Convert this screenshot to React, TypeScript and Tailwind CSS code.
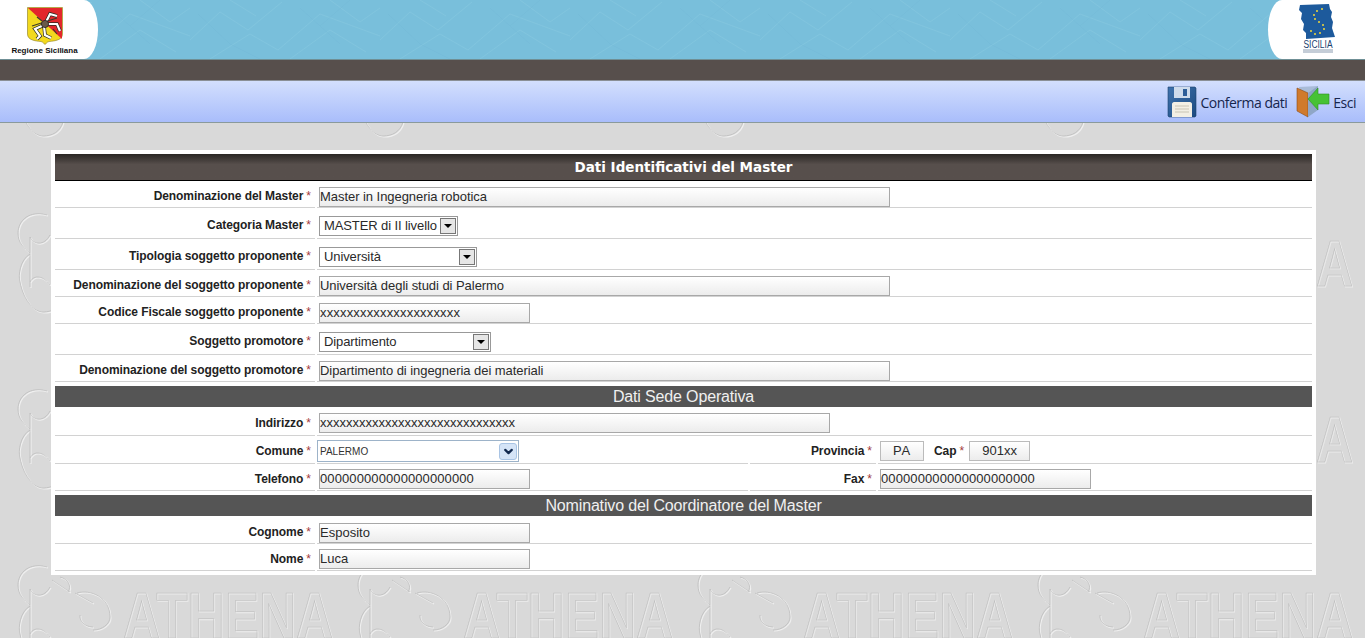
import type { ReactNode } from "react";
import { ChevronDown } from "lucide-react";

const ARIAL = "font-['Liberation_Sans',Arial,sans-serif]";

// embossed ATHENA tile repeated over the grey page
const Watermark = () => {
  const curls = (
    <g fill="none" transform="translate(0,64)">
      <path d="M47 -25C30 -30 18 -20 18 -7C18 3 24 8 30 13" />
      <path d="M30 -3V47" />
      <path d="M30 -3C34 5 44 6 50 -5" />
      <path d="M30 14C20 20 18 35 20 42C24 62 35 72 43 72C52 72 60 68 63 58" />
      <path d="M30 42C34 34 44 36 50 45" />
      <path d="M52 -12L70 0M75 1L93 11" />
      <path d="M60 -15C68 -13 72 -6 68 0" />
      <path d="M77 1C90 -3 110 5 110 25C110 32 102 38 93 38" />
      <path d="M80 23C79 28 84 35 93 35" />
    </g>
  );
  const word = (
    <text
      x="123"
      y="110"
      fill="none"
      fontFamily="Liberation Sans, Arial, sans-serif"
      fontSize="64"
      fontWeight="700"
      textLength="210"
      lengthAdjust="spacingAndGlyphs"
    >
      ATHENA
    </text>
  );
  return (
    <svg className="absolute inset-0 h-full w-full" aria-hidden="true">
      <defs>
        <pattern id="athena" width="340" height="176" patternUnits="userSpaceOnUse">
          <g stroke="#f0f0f0" strokeWidth="1.1" transform="translate(1,1)">{curls}</g>
          <g stroke="#bababa" strokeWidth="0.7">{curls}</g>
          <g stroke="#ececec" strokeWidth="0.8" transform="translate(1,1)">{word}</g>
          <g stroke="#bcbcbc" strokeWidth="0.6">{word}</g>
        </pattern>
      </defs>
      <rect width="100%" height="100%" fill="url(#athena)" />
    </svg>
  );
};

// faint paper grain of the blue header
const HeaderTexture = () => (
  <svg className="absolute inset-0 h-full w-full" aria-hidden="true">
    <defs>
      <pattern id="paper" width="190" height="59" patternUnits="userSpaceOnUse">
        <path
          d="M0 40L30 12L58 30L92 2M20 59L60 34L88 50L130 14L190 36M100 59L140 30L176 52M140 0L170 22L190 8M40 0L66 16"
          fill="none"
          stroke="#86c7df"
          strokeWidth="0.6"
        />
        <path d="M8 14L40 44L70 59M110 8L150 44M160 0L130 26" fill="none" stroke="#72b9d6" strokeWidth="0.5" />
      </pattern>
    </defs>
    <rect width="100%" height="100%" fill="url(#paper)" />
  </svg>
);

const RegioneLogo = () => (
  <svg width="36" height="38" viewBox="0 0 36 38" className="block">
    <path d="M0.5 0.5H35.5V27C35.5 33 28 34 22 34.5C20 35 18.5 37 18 37.5C17.5 37 16 35 14 34.5C8 34 0.5 33 0.5 27Z" fill="#f2d91e" stroke="#8a7a20" strokeWidth="0.6" />
    <path d="M1 1H35V32Z" fill="#e3262b" />
    <g fill="none" stroke="#2b2b22" strokeWidth="3.6">
      <path d="M18 17L23 7L30 9M20 17L30 17L33 24" />
      <path d="M17 18L8 22L13 29L10 32M17 19L18 28L24 31" />
    </g>
    <g fill="none" stroke="#fff" strokeWidth="2.2">
      <path d="M18 17L23 7L30 9M20 17L30 17L33 24" />
      <path d="M17 18L8 22L13 29L10 32M17 19L18 28L24 31" />
    </g>
    <path d="M5 19L30 11M10 10L15 14M26 22L30 27" stroke="#3b3b2a" strokeWidth="1.2" fill="none" />
    <circle cx="18" cy="17" r="3.6" fill="#6a5a4a" stroke="#222" strokeWidth="0.8" />
  </svg>
);

const SiciliaLogo = () => (
  <svg width="40" height="50" viewBox="0 0 40 50" className="block">
    <path d="M2 1L31 0L32 5L34 8L33 13L35 18L34 24L36 30L37 33L8 35L8 29L5 26L6 20L3 15L4 9L1 6Z" fill="#1d5a9c" />
    <g fill="#f0d83a">
      <circle cx="24" cy="5" r="1" />
      <circle cx="19" cy="7" r="1" />
      <circle cx="16" cy="11" r="1" />
      <circle cx="17" cy="15" r="1" />
      <circle cx="21" cy="18" r="1" />
      <circle cx="25" cy="21" r="1" />
      <circle cx="26" cy="25" r="1" />
      <circle cx="22" cy="29" r="1" />
      <circle cx="17" cy="30" r="1" />
      <circle cx="13" cy="27" r="1" />
    </g>
    <text x="20" y="44" textAnchor="middle" fontFamily="Liberation Sans, Arial, sans-serif" fontSize="10" fill="#17406e" textLength="29" lengthAdjust="spacingAndGlyphs">
      SICILIA
    </text>
    <path d="M5 46H35M5 48H35" stroke="#8a9bb0" strokeWidth="1" />
  </svg>
);

const FloppyIcon = () => (
  <svg width="30" height="32" viewBox="0 0 30 32" className="block">
    <defs>
      <linearGradient id="floppy" x1="0" y1="0" x2="1" y2="1">
        <stop offset="0" stopColor="#3f73ad" />
        <stop offset="1" stopColor="#1c4a80" />
      </linearGradient>
    </defs>
    <path d="M1 1H28L29 2V30L28 31H2L1 30Z" fill="url(#floppy)" stroke="#1b3f6c" strokeWidth="0.6" />
    <rect x="7" y="1" width="16" height="11" fill="#cfdcec" />
    <rect x="16" y="3" width="4" height="7" fill="#2d5e98" />
    <path d="M5 31V18C5 17 6 16 7 16H23C24 16 25 17 25 18V31Z" fill="#f3efe4" />
    <path d="M8 20H22M8 23H22M8 26H22" stroke="#c9c4b4" strokeWidth="1" />
  </svg>
);

const DoorIcon = () => (
  <svg width="34" height="33" viewBox="0 0 34 33" className="block">
    <path d="M3 2L22 1V25L9 26Z" fill="#a9bcd8" />
    <path d="M1 3L12 8V32L1 26Z" fill="#d07a2c" stroke="#8a4c18" strokeWidth="0.6" />
    <path d="M12 8L22 1V25L12 32Z" fill="#8fa6c6" />
    <path d="M33 9V19H22V25L12 14L22 3V9Z" fill="#46c234" stroke="#2f8f24" strokeWidth="0.6" />
  </svg>
);

const Section = ({ title }: { title: string }) => (
  <div className={`h-[21px] bg-[#555555] text-center text-base leading-[21px] tracking-[-0.15px] text-[#f0f0f0] ${ARIAL}`}>
    {title}
  </div>
);

const Label = ({ text, low }: { text: string; low?: boolean }) => (
  <div className={`flex items-center ${low ? "h-5" : "h-[18px]"}`}>
    <span className="text-xs font-bold tracking-[-0.07px] text-[#222]">{text}</span>
    <span className="ml-[3px] text-xs text-[#a33a3a]">*</span>
  </div>
);

const Field = ({ value, className, center }: { value: string; className: string; center?: boolean }) => (
  <div
    className={`h-5 shrink-0 overflow-hidden whitespace-nowrap border border-[#a8a8a8] bg-gradient-to-b from-white to-[#ececec] text-[13px] leading-[18px] text-[#2a2a2a] ${center ? "text-center" : ""} ${className}`}
  >
    {value}
  </div>
);

const SelectBox = ({ value, className }: { value: string; className: string }) => (
  <div className={`flex h-5 items-center justify-between border border-[#999] bg-white pl-1 pr-px text-[13px] tracking-[-0.1px] text-[#2a2a2a] ${className}`}>
    <span className="whitespace-nowrap">{value}</span>
    <span className="flex h-4 w-4 items-center justify-center border border-[#777] bg-[#e6e6e6]">
      <span className="h-0 w-0 border-x-[4px] border-t-[4px] border-x-transparent border-t-black" />
    </span>
  </div>
);

type RowProps = { label: string; top: string; height: string; low?: boolean; children: ReactNode };

const Row = ({ label, top, height, low, children }: RowProps) => (
  <div className={`flex gap-[2px] ${height}`}>
    <div className={`flex w-[260px] shrink-0 items-start justify-end border-b border-[#d2d2d2] pr-1 ${top}`}>
      <Label text={label} low={low} />
    </div>
    <div className={`flex flex-1 items-start border-b border-[#d2d2d2] ${top}`}>{children}</div>
  </div>
);

type SplitRowProps = RowProps & { rightLabel: string; right: ReactNode };

const SplitRow = ({ label, top, height, children, rightLabel, right }: SplitRowProps) => (
  <div className={`flex gap-[2px] ${height}`}>
    <div className={`flex w-[260px] shrink-0 items-start justify-end border-b border-[#d2d2d2] pr-1 ${top}`}>
      <Label text={label} low />
    </div>
    <div className={`flex w-[431px] shrink-0 items-start border-b border-[#d2d2d2] ${top}`}>{children}</div>
    <div className={`flex w-[126px] shrink-0 items-start justify-end border-b border-[#d2d2d2] pr-1 ${top}`}>
      <Label text={rightLabel} low />
    </div>
    <div className={`flex flex-1 items-start border-b border-[#d2d2d2] ${top}`}>{right}</div>
  </div>
);

export default function App() {
  return (
    <div className={`relative h-[638px] overflow-hidden bg-[#d9d9d9] ${ARIAL}`}>
      <Watermark />

      <div className="relative">
        {/* header with the two logos */}
        <div className="relative flex h-[59px] justify-between overflow-hidden bg-[#79bfdb]">
          <HeaderTexture />
          <div className="relative flex w-[98px] flex-col items-center rounded-r-[14px_50%] bg-white pt-[7px] pr-[9px]">
            <RegioneLogo />
            <span className="mt-px text-[8px] font-bold leading-[9px] whitespace-nowrap text-[#111]">
              Regione Siciliana
            </span>
          </div>
          <div className="relative w-[97px] rounded-l-[14px_50%] bg-white pt-[4px] pl-[30px]">
            <SiciliaLogo />
          </div>
        </div>

        <div className="h-[22px] border-t border-t-[#6f8f95] border-b border-b-[#8a8f95] bg-[#574f4c]" />

        {/* toolbar */}
        <div className="flex h-[42px] items-center justify-end border-b border-[#8a9a9c] bg-gradient-to-b from-[#d3dffd] to-[#a9bdfb] pr-[9px] pl-px font-['Open_Sans',sans-serif] text-sm text-[#16264d]">
          <FloppyIcon />
          <span className="mr-[9px] ml-[3px] pt-[3px] tracking-[-0.5px]">Conferma dati</span>
          <DoorIcon />
          <span className="ml-[3px] pt-[3px] tracking-[-0.5px]">Esci</span>
        </div>

        {/* form panel */}
        <div className="mt-[27px] ml-[51px] w-[1265px] bg-white p-1">
          <div className="h-[27px] border-b border-black bg-gradient-to-b from-[#2a2624] via-[#574f4c] via-40% to-[#574f4c] text-center font-['DejaVu_Sans',sans-serif] text-[13.5px] leading-[26px] font-bold text-white">
            Dati Identificativi del Master
          </div>

          <Row label="Denominazione del Master" top="pt-[6px]" height="h-[27px]">
            <Field value="Master in Ingegneria robotica" className="ml-[2px] w-[571px] tracking-[-0.05px]" />
          </Row>
          <Row label="Categoria Master" top="pt-[8px]" height="h-[31px]">
            <SelectBox value="MASTER di II livello" className="ml-[2px] w-[139px]" />
          </Row>
          <Row label="Tipologia soggetto proponente" top="pt-[8px]" height="h-[31px]">
            <SelectBox value="Università" className="ml-[2px] w-[158px]" />
          </Row>
          <Row label="Denominazione del soggetto proponente" top="pt-[6px]" height="h-[27px]">
            <Field value="Università degli studi di Palermo" className="ml-[2px] w-[571px] tracking-[-0.05px]" />
          </Row>
          <Row label="Codice Fiscale soggetto proponente" top="pt-[6px]" height="h-[27px]">
            <Field value="xxxxxxxxxxxxxxxxxxxxx" className="ml-[2px] w-[211px] tracking-[0.17px]" />
          </Row>
          <Row label="Soggetto promotore" top="pt-[8px]" height="h-[31px]">
            <SelectBox value="Dipartimento" className="ml-[2px] w-[172px]" />
          </Row>
          <Row label="Denominazione del soggetto promotore" top="pt-[6px]" height="h-[27px]">
            <Field value="Dipartimento di ingegneria dei materiali" className="ml-[2px] w-[571px] tracking-[-0.05px]" />
          </Row>

          <div className="mt-1">
            <Section title="Dati Sede Operativa" />
          </div>
          <Row label="Indirizzo" top="pt-[6px]" height="h-[29px]" low>
            <Field value="xxxxxxxxxxxxxxxxxxxxxxxxxxxxxx" className="ml-[2px] w-[511px]" />
          </Row>
          <SplitRow
            label="Comune"
            top="pt-[5px]"
            height="h-[28px]"
            rightLabel="Provincia"
            right={
              <div className="flex items-start">
                <Field value="PA" center className="ml-[2px] w-[44px] border-[#bbb] tracking-[0.8px]" />
                <div className="ml-[10px]">
                  <Label text="Cap" low />
                </div>
                <Field value="901xx" center className="ml-[5px] w-[61px] border-[#bbb]" />
              </div>
            }
          >
            <div className="-mt-px flex h-[22px] w-[202px] items-center justify-between border border-[#9db3c9] bg-white pr-[1px] pl-[2px] text-[10px] text-[#333]">
              <span>PALERMO</span>
              <span className="flex h-[17px] w-[18px] items-center justify-center rounded-[3px] border border-[#a9c4e4] bg-[#d5e4f7] text-[#12294f]">
                <ChevronDown size={13} strokeWidth={4} />
              </span>
            </div>
          </SplitRow>
          <SplitRow
            label="Telefono"
            top="pt-[5px]"
            height="h-[27px]"
            rightLabel="Fax"
            right={<Field value="000000000000000000000" className="ml-[2px] w-[211px] tracking-[0.1px]" />}
          >
            <Field value="000000000000000000000" className="ml-[2px] w-[211px] tracking-[0.1px]" />
          </SplitRow>

          <div className="mt-1">
            <Section title="Nominativo del Coordinatore del Master" />
          </div>
          <Row label="Cognome" top="pt-[7px]" height="h-[28px]">
            <Field value="Esposito" className="ml-[2px] w-[211px]" />
          </Row>
          <Row label="Nome" top="pt-[5px]" height="h-[27px]" low>
            <Field value="Luca" className="ml-[2px] w-[211px]" />
          </Row>
        </div>
      </div>
    </div>
  );
}
